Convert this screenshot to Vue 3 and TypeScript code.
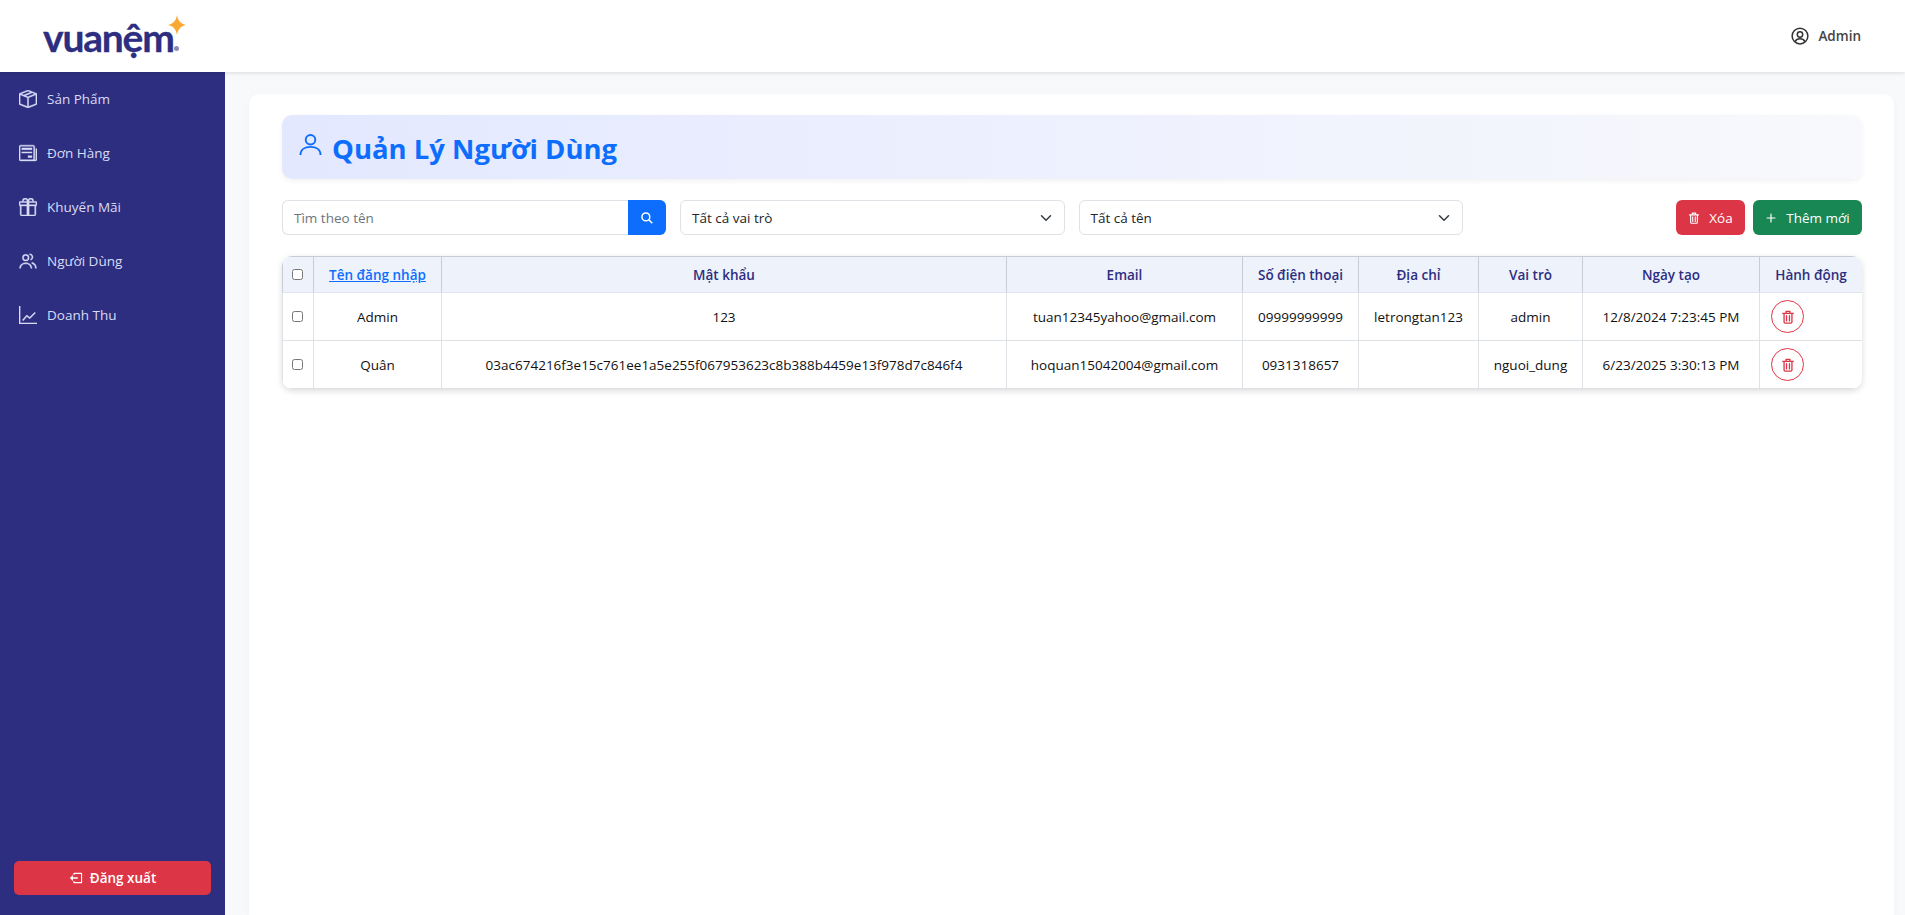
<script setup lang="ts">
interface Item { label: string; paths: string[] }
const nav: Item[] = [
  { label: 'Sản Phẩm', paths: ['M8.186 1.113a.5.5 0 0 0-.372 0L1.846 3.5l2.404.961L10.404 2zm3.564 1.426L5.596 5 8 5.961 14.154 3.5zm3.25 1.7-6.5 2.6v7.922l6.5-2.6V4.24zM7.5 14.762V6.838L1 4.239v7.925zM7.443.184a1.5 1.5 0 0 1 1.114 0l7.129 2.852A.5.5 0 0 1 16 3.5v8.662a1 1 0 0 1-.629.928l-7.185 2.874a.5.5 0 0 1-.372 0L.63 13.09a1 1 0 0 1-.63-.928V3.5a.5.5 0 0 1 .314-.464z'] },
  { label: 'Đơn Hàng', paths: ['M0 2.5A1.5 1.5 0 0 1 1.5 1h11A1.5 1.5 0 0 1 14 2.5v10.528c0 .3-.05.654-.238.972h.738a.5.5 0 0 0 .5-.5v-9a.5.5 0 0 1 1 0v9a1.5 1.5 0 0 1-1.5 1.5H1.497A1.497 1.497 0 0 1 0 13.5zM12 14c.37 0 .654-.211.853-.441.092-.106.147-.279.147-.531V2.5a.5.5 0 0 0-.5-.5h-11a.5.5 0 0 0-.5.5v11c0 .278.223.5.497.5z', 'M2.5 3.5h9V5h-9zM2.5 7h9v1h-9zM8 10.5h3.5V12H8z'] },
  { label: 'Khuyến Mãi', paths: ['M3 2.5a2.5 2.5 0 0 1 5 0 2.5 2.5 0 0 1 5 0v.006c0 .07 0 .27-.038.494H15a1 1 0 0 1 1 1v2a1 1 0 0 1-1 1v7.5a1.5 1.5 0 0 1-1.5 1.5h-11A1.5 1.5 0 0 1 1 14.5V7a1 1 0 0 1-1-1V4a1 1 0 0 1 1-1h2.038A3 3 0 0 1 3 2.506zm1.068.5H7v-.5a1.5 1.5 0 1 0-3 0c0 .085.002.274.045.43zM9 3h2.932l.023-.07c.043-.156.045-.345.045-.43a1.5 1.5 0 0 0-3 0zM1 4v2h6V4zm8 0v2h6V4zm5 3H9v8h4.5a.5.5 0 0 0 .5-.5zm-7 8V7H2v7.5a.5.5 0 0 0 .5.5z'] },
  { label: 'Người Dùng', paths: ['M.5 14.5c0-3 2.3-5 5.5-5s5.5 2 5.5 5h-1c0-2.4-1.8-4-4.5-4s-4.5 1.600-4.500 4zM6 2a3 3 0 1 1 0 6 3 3 0 0 1 0-6m0 1a2 2 0 1 0 0 4 2 2 0 0 0 0-4M9.500 1.500a3 3 0 0 1 1 5.800l-.4-.9a2 2 0 0 0-.6-3.900zM11.500 9.200c2.500.6 4 2.500 4 5.300h-1c0-2.200-1.200-3.800-3.200-4.300z'] },
  { label: 'Doanh Thu', paths: ['M0 0h1v15h15v1H0z', 'M3 12.5l3.800-4.500 2.700 2 4.500-4.500.7.7-5.100 5.200-2.700-2-3.100 3.700z'] },
]
const columns = ['Mật khẩu', 'Email', 'Số điện thoại', 'Địa chỉ', 'Vai trò', 'Ngày tạo', 'Hành động']
const widths = [31, 128, 565, 236, 116, 120, 104, 177, 103]
const rows = [
  ['Admin', '123', 'tuan12345yahoo@gmail.com', '09999999999', 'letrongtan123', 'admin', '12/8/2024 7:23:45 PM'],
  ['Quân', '03ac674216f3e15c761ee1a5e255f067953623c8b388b4459e13f978d7c846f4', 'hoquan15042004@gmail.com', '0931318657', '', 'nguoi_dung', '6/23/2025 3:30:13 PM'],
]
</script>

<template>
  <div class="page">
    <header class="topbar">
      <div class="logo">
        <span class="logo-text">vuanệm</span>
        <svg class="logo-star" viewBox="0 0 20 22"><path d="M10 0c1 6 4 10 10 11-6 1-9 5-10 11C9 16 6 12 0 11 6 10 9 6 10 0z" /></svg>
        <span class="logo-reg"></span>
      </div>
      <div class="user">
        <svg class="user-icon" viewBox="0 0 24 24"><circle cx="12" cy="12" r="10.5" /><circle cx="12" cy="10" r="3.6" /><path d="M5.5 19.5c1.2-2.6 3.6-3.7 6.5-3.7s5.3 1.1 6.5 3.7" /></svg>
        <span>Admin</span>
      </div>
    </header>
    <div class="body">
      <aside class="sidebar">
        <nav class="nav">
          <a v-for="item in nav" :key="item.label" class="nav-item">
            <svg class="nav-icon" viewBox="0 0 16 16"><path v-for="p in item.paths" :key="p" :d="p" /></svg>
            <span>{{ item.label }}</span>
          </a>
        </nav>
        <button class="logout">
          <svg class="btn-icon" viewBox="0 0 16 16"><path d="M5 4.5V3a1 1 0 0 1 1-1h8a1 1 0 0 1 1 1v10a1 1 0 0 1-1 1H6a1 1 0 0 1-1-1v-1.5h1.3v1.200h7.400V3.300H6.300v1.200z" /><path d="M1 8l3.500-3.500v2.700H10v1.600H4.500v2.700z" /></svg>
          Đăng xuất
        </button>
      </aside>
      <main class="main">
        <section class="card">
          <div class="banner">
            <svg class="banner-icon" viewBox="0 0 24 24"><circle cx="12" cy="7" r="5" /><path d="M1.5 23c0-5.5 4.5-8.5 10.500-8.500s10.500 3 10.500 8.500" /></svg>
            <h1>Quản Lý Người Dùng</h1>
          </div>
          <div class="toolbar">
            <div class="search">
              <input class="search-input" placeholder="Tìm theo tên" />
              <button class="search-btn"><svg viewBox="0 0 16 16"><circle cx="6.5" cy="6.5" r="5.2" /><path d="M10.500 10.500l4.500 4.500" /></svg></button>
            </div>
            <div class="select"><span>Tất cả vai trò</span><svg viewBox="0 0 16 16"><path d="m2 5 6 6 6-6" /></svg></div>
            <div class="select"><span>Tất cả tên</span><svg viewBox="0 0 16 16"><path d="m2 5 6 6 6-6" /></svg></div>
            <div class="actions">
              <button class="btn danger">
                <svg class="trash" viewBox="0 0 16 16"><path d="M2 3.8h12M5.800 3.800V1.500h4.400v2.300M3.500 3.800v9.900a1.300 1.300 0 0 0 1.300 1.300h6.400a1.300 1.300 0 0 0 1.300-1.300V3.800M6.300 6.500v6M9.700 6.500v6" /></svg>
                Xóa
              </button>
              <button class="btn success"><svg class="btn-icon" viewBox="0 0 16 16"><path d="M8 2a.8.8 0 0 1 .8.8v4.400h4.400a.8.8 0 0 1 0 1.600H8.800v4.400a.8.8 0 0 1-1.600 0V8.800H2.800a.8.8 0 0 1 0-1.600h4.400V2.800A.8.8 0 0 1 8 2" /></svg>Thêm mới</button>
            </div>
          </div>
          <div class="table-wrap">
            <table>
              <colgroup><col v-for="(w, i) in widths" :key="i" :style="{ width: w + 'px' }" /></colgroup>
              <thead>
                <tr>
                  <th class="check"><input type="checkbox" class="cb" /></th>
                  <th class="sort"><a>Tên đăng nhập</a></th>
                  <th v-for="c in columns" :key="c">{{ c }}</th>
                </tr>
              </thead>
              <tbody>
                <tr v-for="row in rows" :key="row[0]">
                  <td class="check"><input type="checkbox" class="cb" /></td>
                  <td v-for="(cell, i) in row" :key="i">{{ cell }}</td>
                  <td class="act">
                    <button class="del">
                      <svg class="trash" viewBox="0 0 16 16"><path d="M2 3.8h12M5.800 3.800V1.500h4.400v2.300M3.500 3.800v9.900a1.300 1.300 0 0 0 1.300 1.300h6.400a1.300 1.300 0 0 0 1.300-1.300V3.800M6.300 6.500v6M9.700 6.500v6" /></svg>
                    </button>
                  </td>
                </tr>
              </tbody>
            </table>
          </div>
        </section>
      </main>
    </div>
  </div>
</template>

<style>
html, body { margin: 0; height: 100%; overflow: hidden; }
</style>

<style scoped>
.page { height: 915px; display: flex; flex-direction: column; font-family: "Open Sans", "Noto Sans", sans-serif; font-size: 13.5px; color: #212529; background: #f8f9fa; }
.topbar { height: 72px; flex: none; box-sizing: border-box; background: #fff; display: flex; align-items: center; justify-content: space-between; padding: 0 44px 0 43px; box-shadow: 0 1px 4px rgba(0,0,0,.12); position: relative; z-index: 2; }
.logo { position: relative; width: 145px; height: 72px; }
.logo-text { position: absolute; left: 0; top: 11px; font-family: Lato, sans-serif; font-weight: 700; font-size: 39px; letter-spacing: -1.2px; line-height: 52px; color: #2d2e7f; -webkit-text-stroke: .3px #2d2e7f; }
.logo-star { position: absolute; left: 124px; top: 15px; width: 20px; height: 20px; fill: #f9a932; }
.logo-reg { position: absolute; left: 131px; top: 46px; width: 5px; height: 5px; border-radius: 50%; background: #8a8bb8; }
.user { display: flex; align-items: center; gap: 9px; font-weight: 600; font-size: 13.5px; color: #444; }
.user-icon { width: 18px; height: 18px; fill: none; stroke: #333; stroke-width: 2; }
.body { flex: 1; display: flex; min-height: 0; }
.sidebar { width: 225px; flex: none; background: #2d2e7f; display: flex; flex-direction: column; justify-content: space-between; padding: 0 14px 20px; box-sizing: border-box; }
.nav { display: flex; flex-direction: column; margin: 0 -14px; }
.nav-item { height: 54px; display: flex; align-items: center; gap: 10px; padding-left: 19px; color: #d9dcf5; font-size: 13.5px; }
.nav-icon { width: 18px; height: 18px; fill: #d9dcf5; stroke: #d9dcf5; stroke-width: .4; flex: none; }
.logout { height: 34px; width: 197px; border: 0; border-radius: 5px; background: #dc3545; color: #fff; font: 600 13.5px "Open Sans", sans-serif; display: flex; align-items: center; justify-content: center; gap: 7px; }
.btn-icon { width: 14px; height: 14px; fill: #fff; }
.main { flex: 1; min-width: 0; padding: 22px 11px 0 24px; }
.card { height: 100%; box-sizing: border-box; background: #fff; border-radius: 10px 10px 0 0; padding: 21px 32px 0 33px; box-shadow: 0 2px 8px rgba(0,0,0,.03); }
.banner { height: 64px; display: flex; align-items: center; gap: 10px; padding-left: 17px; border-radius: 10px; background: linear-gradient(90deg, #e3e8ff, #f8f9fc); box-shadow: 0 2px 5px rgba(0,0,0,.06); box-sizing: border-box; }
.banner-icon { width: 23px; height: 23px; fill: none; stroke: #0d6efd; stroke-width: 2; margin-top: -5px; }
h1 { margin: 0; padding-top: 3px; font-size: 27.5px; font-weight: 700; color: #0d6efd; line-height: 1.2; }
.toolbar { display: flex; align-items: stretch; height: 35px; margin-top: 21px; gap: 14px; }
.search { width: 384px; display: flex; flex: none; }
.search-input { flex: 1; min-width: 0; box-sizing: border-box; border: 1px solid #dee2e6; border-right: 0; border-radius: 6px 0 0 6px; padding: 0 11px; font: 13.5px "Open Sans", sans-serif; outline: 0; color: #212529; }
.search-input::placeholder { color: #6c757d; opacity: 1; }
.search-btn { width: 38px; border: 0; border-radius: 0 6px 6px 0; background: #0d6efd; padding: 0; display: flex; align-items: center; justify-content: center; }
.search-btn svg { width: 12px; height: 12px; fill: none; stroke: #fff; stroke-width: 2; }
.select { width: 384.5px; flex: none; box-sizing: border-box; border: 1px solid #dee2e6; border-radius: 6px; display: flex; align-items: center; justify-content: space-between; padding: 0 12px 0 11px; background: #fff; }
.select svg { width: 12px; height: 12px; fill: none; stroke: #343a40; stroke-width: 2; stroke-linecap: round; stroke-linejoin: round; }
.actions { margin-left: auto; display: flex; gap: 8px; }
.btn { height: 35px; border: 0; border-radius: 6px; color: #fff; font: 13.5px "Open Sans", sans-serif; display: flex; align-items: center; justify-content: center; padding: 0; gap: 9px; }
.btn .btn-icon { width: 12px; height: 12px; }
.danger { background: #dc3545; width: 69px; }
.success { background: #198754; width: 109px; }
.trash { width: 14px; height: 14px; fill: none; stroke-width: 1.5; stroke-linejoin: round; stroke-linecap: round; }
.btn .trash { width: 12px; height: 12px; stroke: #fff; }
.table-wrap { margin-top: 21px; border-radius: 10px; overflow: hidden; box-shadow: 0 2px 6px rgba(0,0,0,.14); }
table { width: 1580px; table-layout: fixed; border-collapse: collapse; font-size: 13.5px; }
th { height: 36px; padding: 0 4px; background: #eef2fb; color: #2d2e7f; font-weight: 600; border-top: 1px solid #c8ccd4; border-right: 1px solid #c8ccd4; border-bottom: 1px solid #e0e4ee; box-sizing: border-box; text-align: center; }
th:first-child { border-left: 1px solid #c8ccd4; }
th:last-child { border-right: 1px solid #c8ccd4; }
.sort a { color: #0d6efd; text-decoration: underline; }
td { height: 48px; padding: 0 4px; text-align: center; border-right: 1px solid #dee2e6; border-bottom: 1px solid #dee2e6; color: #111; box-sizing: border-box; }
td:first-child { border-left: 1px solid #dee2e6; }
td:last-child { border-right: 0; }
.check { padding: 0 5px 0 3px; }
.cb { appearance: none; width: 11px; height: 11px; margin: 0; border: 1px solid #767676; border-radius: 2.5px; background: #fff; box-sizing: border-box; display: block; margin: auto; }
.act { text-align: left; padding-left: 11px; }
.del { width: 33px; height: 33px; padding: 0; border: 1px solid #dc3545; border-radius: 50%; background: #fff; display: flex; align-items: center; justify-content: center; }
.del .trash { stroke: #dc3545; }
</style>
